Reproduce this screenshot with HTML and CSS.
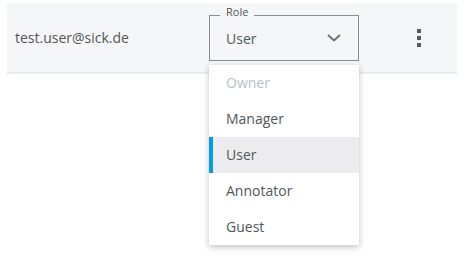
FILE: index.html
```html
<!DOCTYPE html>
<html lang="en">
<head>
  <meta charset="UTF-8" />
  <title>Members</title>
  <link rel="stylesheet" href="styles.css">
</head>
<body>
  <div class="page">
    <div class="member-row">
      <div class="email">test.user@sick.de</div>

      <div class="role-field">
        <span class="role-label">Role</span>
        <span class="role-value">User</span>
        <svg class="chevron" width="14" height="8" viewBox="0 0 14 8">
          <path d="M1 1 L7 6.5 L13 1" fill="none" stroke="#6b7378" stroke-width="2"/>
        </svg>

        <ul class="role-menu">
          <li class="disabled">Owner</li>
          <li>Manager</li>
          <li class="selected">User</li>
          <li>Annotator</li>
          <li>Guest</li>
        </ul>
      </div>

      <div class="more">
        <span></span><span></span><span></span>
      </div>
    </div>
  </div>
</body>
</html>
```

FILE: styles.css
```css
html, body {
  margin: 0;
  height: 100%;
}
body {
  background: #fff;
  font-family: "Open Sans", Arial, sans-serif;
  color: #51575b;
}
.page {
  min-height: 265px;
  padding-top: 3px;
  box-sizing: border-box;
}
.member-row {
  display: flex;
  align-items: center;
  margin: 0 12px 0 7px;
  height: 69px;
  background: #f5f6f7;
  border-bottom: 2px solid #e9ebec;
}
.email {
  width: 194px;
  padding-left: 8px;
  font-size: 14px;
}
.role-field {
  position: relative;
  box-sizing: border-box;
  width: 150px;
  height: 46px;
  margin-top: 1px;
  border: 1px solid #838d93;
  display: flex;
  align-items: center;
  padding: 0 17px 0 16px;
}
.role-label {
  position: absolute;
  top: -11px;
  left: 10px;
  padding: 0 6px;
  background: #f5f6f7;
  font-size: 11px;
  line-height: 14px;
}
.role-value {
  flex: 1;
  font-size: 14px;
}
.chevron {
  display: block;
}
.role-menu {
  position: absolute;
  top: 49px;
  left: -1px;
  z-index: 10;
  width: 150px;
  margin: 0;
  padding: 0;
  list-style: none;
  background: #fff;
  box-shadow: 0 2px 6px rgba(0, 0, 0, 0.25);
}
.role-menu li {
  height: 36px;
  line-height: 36px;
  padding-left: 17px;
  font-size: 14px;
}
.role-menu .disabled {
  color: #b9bfc4;
}
.role-menu .selected {
  background: #ececee;
  box-shadow: inset 4px 0 0 #009cf0;
}
.more {
  margin-left: 58px;
  display: flex;
  flex-direction: column;
  gap: 3px;
}
.more span {
  width: 4px;
  height: 4px;
  background: #545a5f;
}
```
